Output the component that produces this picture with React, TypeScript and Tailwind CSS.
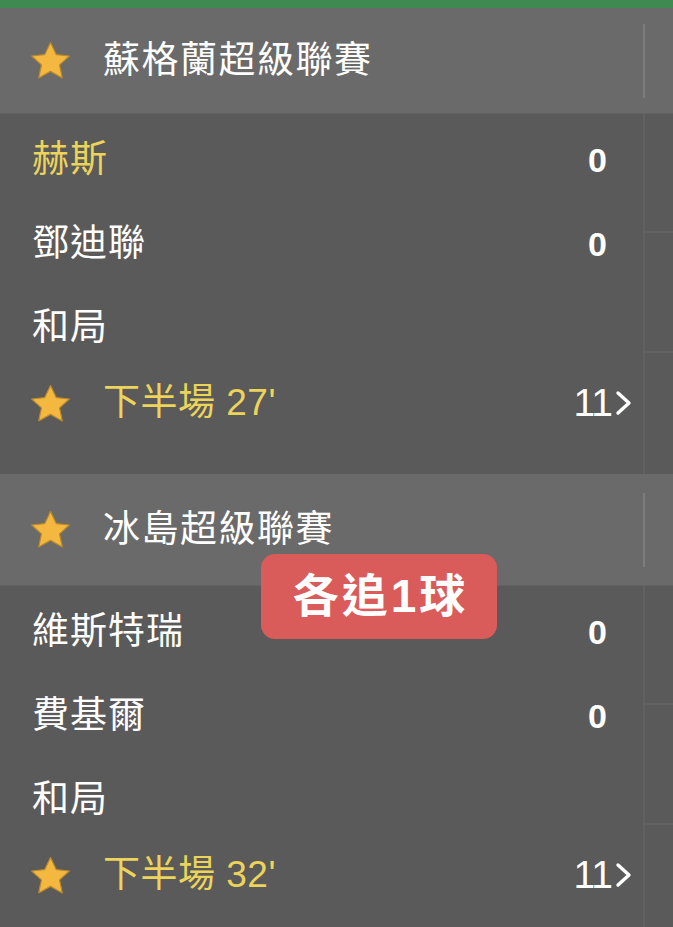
import React from "react";

const font = { fontFamily: '"Liberation Sans", "Noto Sans CJK TC", sans-serif' };

function Star({ className = "" }: { className?: string }) {
  return (
    <svg viewBox="0 0 40 38" className={className}>
      <polygon
        points="20,1.5 25.6,13.2 38.4,14.6 28.8,23.3 31.5,36 20,29.6 8.5,36 11.2,23.3 1.6,14.6 14.4,13.2"
        fill="#f4b840"
        stroke="#b98a2c"
        strokeWidth="1.2"
        strokeLinejoin="round"
      />
    </svg>
  );
}

function Chevron() {
  return (
    <svg viewBox="0 0 20 26" className="w-[20px] h-[26px] ml-[1px]">
      <path d="M5 3 L16 13 L5 23" fill="none" stroke="#ffffff" strokeWidth="3.4" strokeLinecap="round" strokeLinejoin="round" />
    </svg>
  );
}

type Match = { league: string; home: string; away: string; time: string; count: string };

const matches: Match[] = [
  { league: "蘇格蘭超級聯賽", home: "赫斯", away: "鄧迪聯", time: "下半場 27'", count: "11" },
  { league: "冰島超級聯賽", home: "維斯特瑞", away: "費基爾", time: "下半場 32'", count: "11" },
];

function Section({ m, homeYellow, headerH }: { m: Match; homeYellow: boolean; headerH: string }) {
  return (
    <div>
      {/* league header */}
      <div className={`flex items-center bg-[#6a6a6a] border-b border-[#626262] ${headerH}`}>
        <Star className="w-[41px] h-[39px] ml-[30px] mr-[32px]" />
        <div className="flex-1 text-[37px] text-white tracking-[1.5px] leading-none">{m.league}</div>
        <div className="w-[2px] h-[74px] bg-[#7c7c7c] mr-[28px]" />
      </div>
      {/* body */}
      <div className="flex bg-[#5a5a5a]">
        <div className="flex-1 pt-[4px] pb-[38px]">
          <div className="h-[84px] flex items-center pl-[32px] pr-[36px]">
            <span className={`flex-1 text-[37px] tracking-[1px] ${homeYellow ? "text-[#ecd45a]" : "text-white"}`}>{m.home}</span>
            <span className="text-[34px] font-bold text-white">0</span>
          </div>
          <div className="h-[84px] flex items-center pl-[32px] pr-[36px]">
            <span className="flex-1 text-[37px] tracking-[1px] text-white">{m.away}</span>
            <span className="text-[34px] font-bold text-white">0</span>
          </div>
          <div className="h-[84px] flex items-center pl-[32px] pr-[36px]">
            <span className="flex-1 text-[37px] tracking-[1px] text-white">和局</span>
          </div>
          <div className="h-[66px] flex items-center pr-[10px]">
            <Star className="w-[41px] h-[39px] ml-[30px] mr-[32px]" />
            <span className="flex-1 text-[37px] text-[#ecd45a] tracking-[0.5px]">{m.time}</span>
            <span className="text-[39px] text-white tracking-[-1px]">{m.count}</span>
            <Chevron />
          </div>
        </div>
        <div className="w-[30px] border-l-2 border-[#616161]">
          <div className="h-[119px] border-b-2 border-[#626262]" />
          <div className="h-[120px] border-b-2 border-[#626262]" />
        </div>
      </div>
    </div>
  );
}

export default function App() {
  return (
    <div className="relative w-[673px] h-[927px] overflow-hidden bg-[#5a5a5a]" style={font}>
      <div className="h-[8px] bg-[#3f8a50]" />
      <Section m={matches[0]} homeYellow={true} headerH="h-[106px]" />
      <Section m={matches[1]} homeYellow={false} headerH="h-[112px]" />

      {/* toast */}
      <div className="absolute left-[261px] top-[554px] w-[236px] h-[85px] rounded-[14px] bg-[#d95b5a] flex items-center justify-center">
        <span className="text-white text-[46px] font-bold tracking-[3px] pl-[3px]">各追1球</span>
      </div>
    </div>
  );
}
